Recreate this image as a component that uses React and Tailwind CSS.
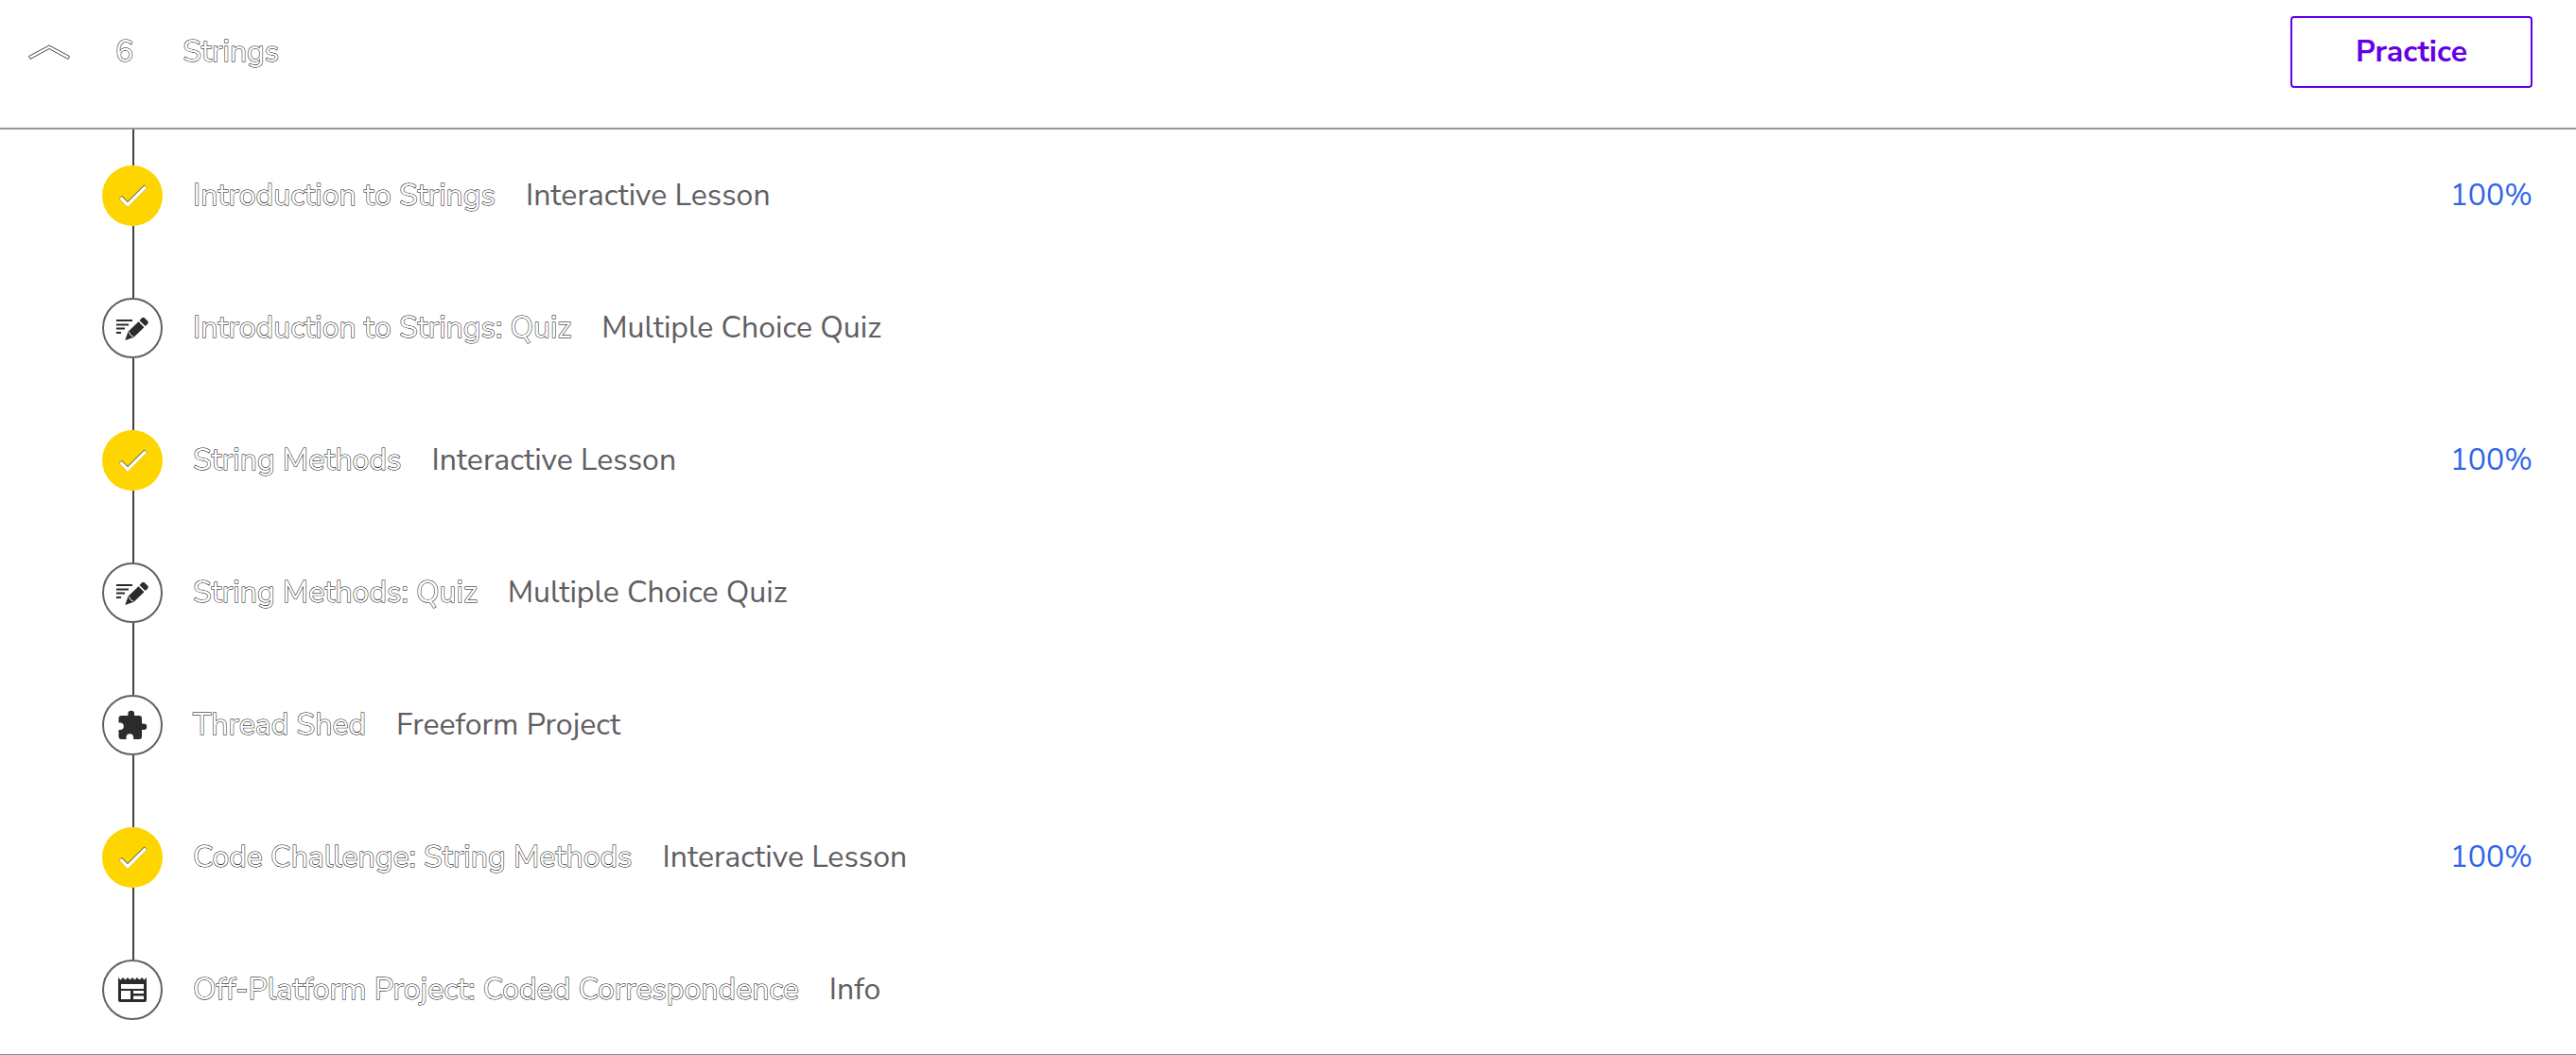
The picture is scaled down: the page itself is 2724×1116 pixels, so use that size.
import React from "react";

const items = [
  { title: "Introduction to Strings", type: "Interactive Lesson", icon: "check", progress: "100%" },
  { title: "Introduction to Strings: Quiz", type: "Multiple Choice Quiz", icon: "quiz" },
  { title: "String Methods", type: "Interactive Lesson", icon: "check", progress: "100%" },
  { title: "String Methods: Quiz", type: "Multiple Choice Quiz", icon: "quiz" },
  { title: "Thread Shed", type: "Freeform Project", icon: "puzzle" },
  { title: "Code Challenge: String Methods", type: "Interactive Lesson", icon: "check", progress: "100%" },
  { title: "Off-Platform Project: Coded Correspondence", type: "Info", icon: "article" },
];

function CheckIcon() {
  return (
    <svg viewBox="0 0 32 32" className="size-8" fill="none" aria-hidden="true">
      <path d="M3.5 17.5 L11 25 L30 6" stroke="#3d3a20" strokeWidth="4" />
      <path d="M3.5 18 L11 25.5 L30 6.5" stroke="#fff" strokeWidth="3.4" />
    </svg>
  );
}

function QuizIcon() {
  return (
    <svg viewBox="0 0 36 32" className="h-8 w-9" fill="#2b2a2d" aria-hidden="true">
      <path d="M1 7h17v2H1zM1 11.5h13v2H1zM1 15.5h9v2H1zM1 20h5v2H1z" />
      <path d="M25.5 8 L28 5.4 Q29.5 4 31 5.4 L34.3 8.8 Q35.5 10.2 34.2 11.6 L31.6 14z" />
      <path d="M24.5 9.2 L30.4 15.2 L19.5 25.8 L10.3 29 L13.5 19.8z" />
      <path d="M14.4 20.2 L16 23.6 L19 25" fill="none" stroke="#fff" strokeWidth="1" />
    </svg>
  );
}

function PuzzleIcon() {
  return (
    <svg viewBox="0 0 32 32" className="size-8" fill="#2b2a2d" aria-hidden="true">
      <path d="M28 14.5h-2V9a3 3 0 0 0-3-3h-5V4a3.3 3.3 0 0 0-6.6 0v2H4.5a3 3 0 0 0-3 3v4.5h1.5a3.8 3.8 0 0 1 0 7.6H1.5V28a3 3 0 0 0 3 3h5v-2a3.8 3.8 0 0 1 7.6 0v2H23a3 3 0 0 0 3-3v-6.9h2a3.3 3.3 0 0 0 0-6.6z" />
    </svg>
  );
}

function ArticleIcon() {
  return (
    <svg viewBox="0 0 32 32" className="size-8" fill="#2b2a2d" fillRule="evenodd" aria-hidden="true">
      <path d="M1 3 L3.5 5.5 L6 3 L8.5 5.5 L11 3 L13.5 5.5 L16 3 L18.5 5.5 L21 3 L23.5 5.5 L26 3 L28.5 5.5 L31 3 V27 Q31 29 29 29 H3 Q1 29 1 27z M4 10v5h24v-5z M4 17v9h10v-9z M17 17v3h11v-3z M17 22.5v3.5h11v-3.5z" />
    </svg>
  );
}

const icons = { check: CheckIcon, quiz: QuizIcon, puzzle: PuzzleIcon, article: ArticleIcon };

function Item({ item, last }) {
  const Icon = icons[item.icon];
  const done = item.icon === "check";
  return (
    <li className="flex pr-[46px] pl-[108px]">
      <div className="flex w-16 shrink-0 flex-col items-center">
        <span className="ml-0.5 h-[38px] w-0.5 bg-[#424147]" />
        <span
          className={
            done
              ? "flex size-16 items-center justify-center rounded-full bg-[#ffd500]"
              : "flex size-16 items-center justify-center rounded-full border-2 border-[#626065] bg-white"
          }
        >
          <Icon />
        </span>
        {last ? <span className="h-9" /> : <span className="ml-0.5 h-[38px] w-0.5 bg-[#424147]" />}
      </div>
      <div className="flex h-[140px] grow items-center pl-8">
        <a href="#lesson" className="mr-8 text-white [-webkit-text-stroke:1px_#000] [paint-order:stroke_fill]">
          {item.title}
        </a>
        <span className="text-[#5f5d62]">{item.type}</span>
        {item.progress && <span className="ml-auto text-[#2f66e9]">{item.progress}</span>}
      </div>
    </li>
  );
}

export default function App() {
  return (
    <section className="overflow-hidden border-b border-[#8d8d8f] bg-white font-['Nunito_Sans','Nunito','Lato',sans-serif] text-[32px] leading-[48px]">
      <header className="flex items-start border-b-2 border-[#929a92] pt-[17px] pr-[46px] pb-[42px] pl-7">
        <button type="button" aria-expanded="true" className="flex h-[76px] items-center text-white">
          <svg viewBox="0 0 48 20" className="mr-[46px] h-5 w-12" fill="#fff" stroke="#4a4a4a" strokeWidth="1" aria-hidden="true">
            <path d="M2.5 14.5 L24 3 L45.5 14.5 L44 17.5 L24 6.5 L4 17.5z" />
          </svg>
          <span className="mr-[52px] [-webkit-text-stroke:1px_#000] [paint-order:stroke_fill]">6</span>
          <span className="[-webkit-text-stroke:1px_#000] [paint-order:stroke_fill]">Strings</span>
        </button>
        <button
          type="button"
          className="ml-auto flex h-[76px] w-64 items-center justify-center rounded border-2 border-[#6400e4] font-bold text-[#6400e4]"
        >
          Practice
        </button>
      </header>
      <ul className="-mb-0.5">
        {items.map((item, i) => (
          <Item key={item.title} item={item} last={i === items.length - 1} />
        ))}
      </ul>
    </section>
  );
}
